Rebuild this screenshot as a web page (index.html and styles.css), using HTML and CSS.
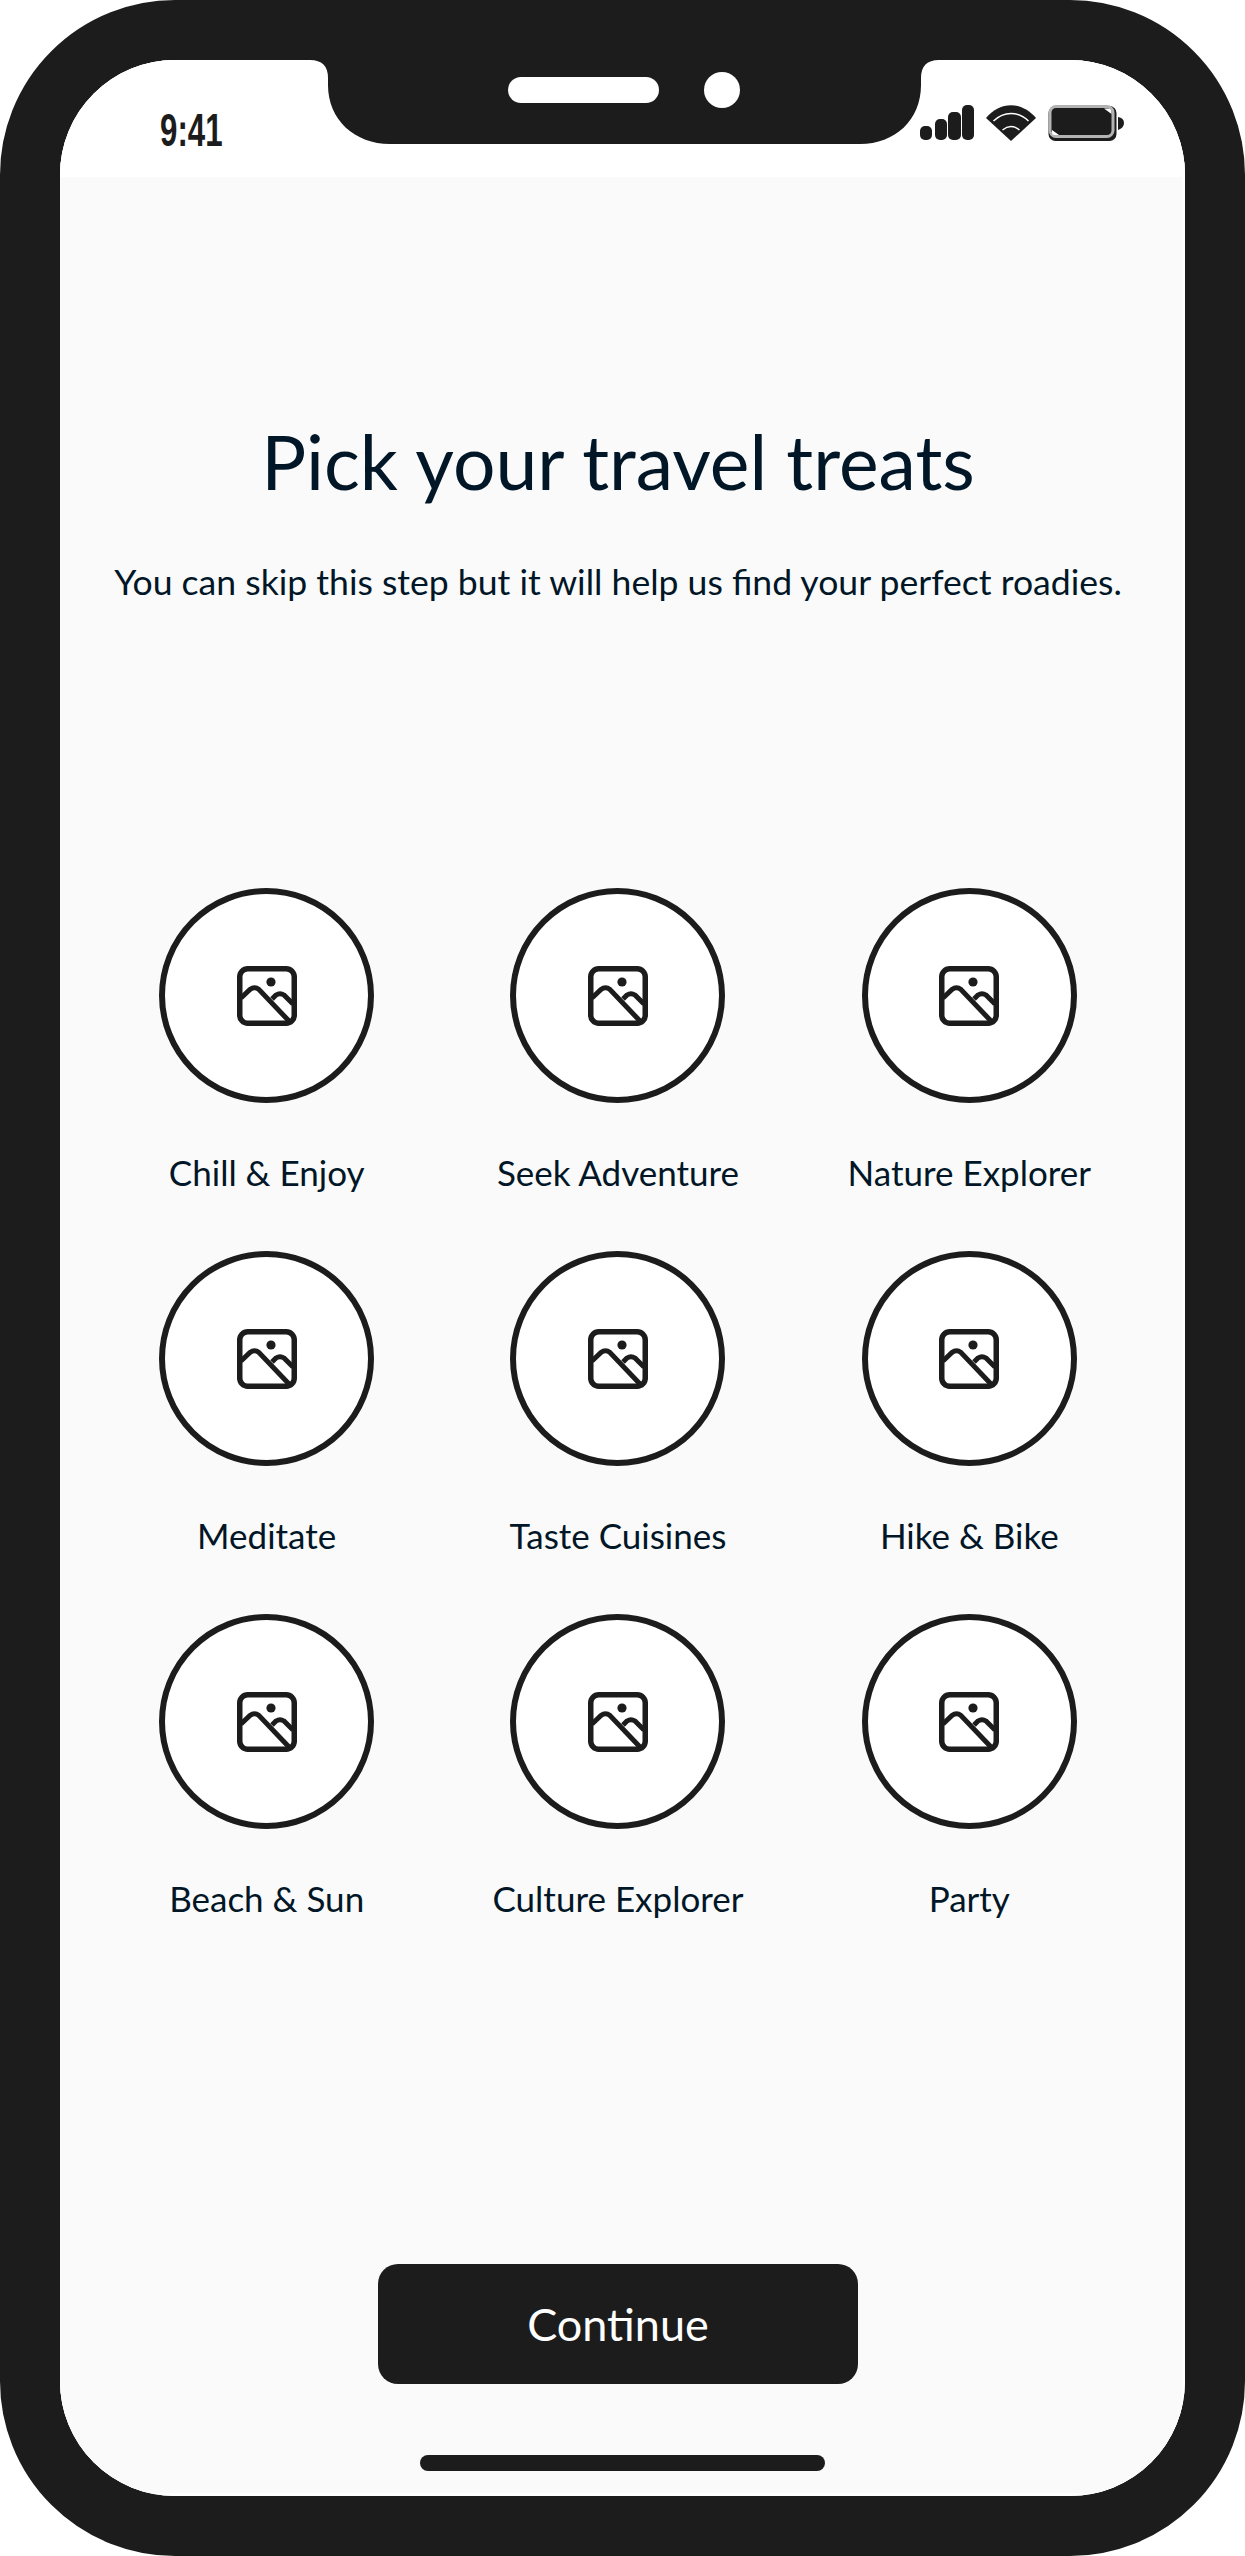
FILE: index.html
```html
<!DOCTYPE html>
<html lang="en">
<head>
<meta charset="utf-8">
<title>Pick your travel treats</title>
<link rel="stylesheet" href="styles.css">
</head>
<body>
<svg class="defs" width="0" height="0" aria-hidden="true">
  <symbol id="img" viewBox="0 0 60 60">
    <rect x="2.75" y="2.75" width="54.5" height="54.5" rx="8" fill="none" stroke="#1c1c1c" stroke-width="5.5"/>
    <circle cx="34" cy="16" r="4.6" fill="#1c1c1c"/>
    <path d="M4 32 13 23.5Q17.5 20 22 23.5L52 55" fill="none" stroke="#1c1c1c" stroke-width="5"/>
    <path d="M35 33 39 29Q43 26.500 47 29L56 38" fill="none" stroke="#1c1c1c" stroke-width="5"/>
  </symbol>
</svg>
<div class="device">
  <div class="screen">
    <header class="status">
      <span class="time">9:41</span>
      <div class="indicators">
        <svg class="signal" width="54" height="35" viewBox="0 0 54 35"><g fill="#1c1c1c"><rect x="0" y="21" width="12" height="14" rx="5"/><rect x="15" y="14" width="12" height="21" rx="5"/><rect x="28" y="7" width="13" height="28" rx="5"/><rect x="42" y="0" width="12" height="35" rx="5"/></g></svg>
        <svg class="wifi" width="50" height="36" viewBox="0 0 50 36"><path d="M0 13C14-4 36-4 50 13L25 36Z" fill="#1c1c1c"/><path d="M7.500 16C18 6 32 6 42.500 16M16.500 25C22 20.500 28 20.500 33.500 25" fill="none" stroke="#fff" stroke-width="1.500"/></svg>
        <svg class="battery" width="76" height="36" viewBox="0 0 76 36"><rect x="0.500" y="1" width="68" height="35" rx="7" fill="#1c1c1c"/><rect x="2" y="1.500" width="63" height="30" rx="6" fill="none" stroke="#b3b3b3" stroke-width="3"/><path d="M5 4.500H60Q62.500 4.500 62.500 8V28Q62.500 29 60 29H8Q5 29 5 27Z" fill="#1c1c1c"/><path d="M56 3.500H61Q63.500 3.500 63.500 9ZM4 25 11 30H6Q4 30 4 28Z" fill="#fff"/><path d="M70 12Q76 13 76 18Q76 23 70 25Z" fill="#1c1c1c"/></svg>
      </div>
    </header>
    <svg class="notch" width="629" height="84" viewBox="0 0 629 84">
      <path d="M0 0H629Q611 0 611 18V25C611 60 585 84 550 84H80C45 84 18 60 18 25V18Q18 0 0 0Z" fill="#1c1c1c"/>
      <rect x="198" y="17" width="151" height="26" rx="13" fill="#fff"/>
      <circle cx="412" cy="30" r="18" fill="#fff"/>
    </svg>
    <main class="content">
      <h1 class="title">Pick your travel treats</h1>
      <p class="subtitle">You can skip this step but it will help us find your perfect roadies.</p>
      <ul class="grid">
        <li class="item"><span class="circle"><svg class="icon"><use href="#img"/></svg></span><span class="label">Chill &amp; Enjoy</span></li>
        <li class="item"><span class="circle"><svg class="icon"><use href="#img"/></svg></span><span class="label">Seek Adventure</span></li>
        <li class="item"><span class="circle"><svg class="icon"><use href="#img"/></svg></span><span class="label">Nature Explorer</span></li>
        <li class="item"><span class="circle"><svg class="icon"><use href="#img"/></svg></span><span class="label">Meditate</span></li>
        <li class="item"><span class="circle"><svg class="icon"><use href="#img"/></svg></span><span class="label">Taste Cuisines</span></li>
        <li class="item"><span class="circle"><svg class="icon"><use href="#img"/></svg></span><span class="label">Hike &amp; Bike</span></li>
        <li class="item"><span class="circle"><svg class="icon"><use href="#img"/></svg></span><span class="label">Beach &amp; Sun</span></li>
        <li class="item"><span class="circle"><svg class="icon"><use href="#img"/></svg></span><span class="label">Culture Explorer</span></li>
        <li class="item"><span class="circle"><svg class="icon"><use href="#img"/></svg></span><span class="label">Party</span></li>
      </ul>
      <button class="cta" type="button">Continue</button>
      <div class="home"></div>
    </main>
  </div>
</div>
</body>
</html>
```

FILE: styles.css
```css
* { box-sizing: border-box; }
html, body { margin: 0; padding: 0; background: #fff; }
.defs { position: absolute; }
.device {
  width: 1245px;
  height: 2556px;
  border: 60px solid #1c1c1c;
  border-radius: 175px;
  background: #fff;
  font-family: "Lato", "Noto Sans", sans-serif;
  color: #011627;
}
.screen {
  position: relative;
  height: 100%;
  padding: 0 3px 3px 0;
  display: flex;
  flex-direction: column;
  background: #fff;
  border-radius: 115px;
  overflow: hidden;
}
.status {
  height: 117px;
  flex: none;
  margin-right: -3px;
  display: flex;
  justify-content: space-between;
  background: #fff;
}
.time {
  margin: 50px 0 0 100px;
  height: 40px;
  font-family: "Liberation Sans", sans-serif;
  font-weight: 700;
  font-size: 46px;
  line-height: 40px;
  color: #1c1c1c;
  white-space: nowrap;
  transform: scaleX(0.68);
  transform-origin: left center;
}
.indicators {
  margin: 45px 61px 0 0;
  display: flex;
  align-items: flex-start;
  gap: 12px;
}
.notch { position: absolute; left: 250px; top: 0; }
.content {
  flex: 1;
  display: flex;
  flex-direction: column;
  align-items: center;
  padding: 244px 37px 21px 31px;
  background: #fafafa;
}
.title {
  margin: 0;
  height: 80px;
  font-size: 75px;
  line-height: 80px;
  font-weight: 400;
  white-space: nowrap;
}
.subtitle {
  margin: 56px 0 0;
  height: 50px;
  font-size: 35.600px;
  line-height: 50px;
  white-space: nowrap;
}
.grid {
  list-style: none;
  margin: 281px 0 0;
  padding: 0;
  width: 100%;
  display: grid;
  grid-template-columns: repeat(3, 1fr);
  row-gap: 54px;
}
.item { display: flex; flex-direction: column; align-items: center; gap: 44px; }
.circle {
  width: 215px;
  height: 215px;
  display: flex;
  align-items: center;
  justify-content: center;
  border: 6.500px solid #1c1c1c;
  border-radius: 50%;
  background: #fff;
}
.icon { width: 60px; height: 60px; }
.label {
  height: 50px;
  font-size: 35px;
  line-height: 50px;
  white-space: nowrap;
}
.cta {
  margin-top: 341px;
  width: 480px;
  height: 120px;
  flex: none;
  border: 0;
  border-radius: 20px;
  background: #1c1c1c;
  color: #fff;
  font: 400 45px "Lato", sans-serif;
}
.home {
  margin-top: 71px;
  align-self: flex-start;
  margin-left: 329px;
  width: 405px;
  height: 16px;
  border-radius: 8px;
  background: #1c1c1c;
}
```
